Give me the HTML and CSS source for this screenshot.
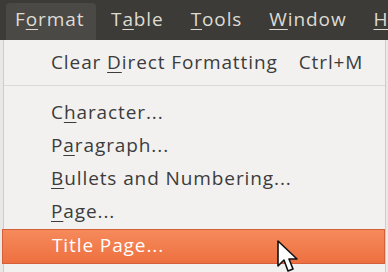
FILE: index.html
```
<!DOCTYPE html>
<html lang="en">
<head>
  <meta charset="UTF-8" />
  <title>Format menu</title>
  <link rel="stylesheet" href="styles.css">
</head>
<body>

<!-- Menu bar -->
<nav class="menubar">
  <span class="bar-item active">F<u>o</u>rmat</span>
  <span class="bar-item">T<u>a</u>ble</span>
  <span class="bar-item"><u>T</u>ools</span>
  <span class="bar-item"><u>W</u>indow</span>
  <span class="bar-item"><u>H</u>elp</span>
</nav>

<!-- Dropdown -->
<div class="dropdown">
  <div class="menu-row first">
    <span>Clear <u>D</u>irect Formatting</span>
    <span class="shortcut">Ctrl+M</span>
  </div>
  <div class="menu-sep"></div>
  <div class="menu-row">C<u>h</u>aracter...</div>
  <div class="menu-row">P<u>a</u>ragraph...</div>
  <div class="menu-row"><u>B</u>ullets and Numbering...</div>
  <div class="menu-row"><u>P</u>age...</div>
  <div class="menu-row selected">Title Page...</div>

  <!-- mouse pointer -->
  <svg class="cursor" width="26" height="34" viewBox="0 0 26 34">
    <path d="M2 1 L2 26 L8 20 L12 31 L17 29 L13 19 L21 19 Z" fill="#fff" stroke="#111" stroke-width="1.6" stroke-linejoin="round"/>
  </svg>
</div>

</body>
</html>
```

FILE: styles.css
```
body {
  margin: 0;
  font-family: "Open Sans", "DejaVu Sans", sans-serif;
  background-color: #e9e8e6;
  color: #3c3c3c;
  overflow: hidden;
}

u {
  text-decoration-thickness: 1px;
  text-underline-offset: 3px;
}

/* Top menu bar */
.menubar {
  height: 40px;
  background: #3c3b37;
  display: flex;
  align-items: flex-end;
  padding-left: 6px;
  font-size: 19px;
  letter-spacing: 0.9px;
  color: #dfdbd2;
  white-space: nowrap;
  overflow: hidden;
}

.bar-item {
  height: 37px;
  line-height: 33px;
  padding: 0 12px 0 15px;
  box-sizing: border-box;
}

.bar-item.active {
  background: #4a4945;
  border-radius: 4px 4px 0 0;
  width: 90px;
  padding-left: 9px;
}

/* Dropdown */
.dropdown {
  position: relative;
  margin: 0 2px 0 3px;
  height: 232px;
  background: #f2f1f0;
  border-left: 1px solid #cfcdca;
  border-right: 1px solid #cfcdca;
  font-size: 19px;
  letter-spacing: 0.9px;
}

.menu-row {
  height: 33px;
  line-height: 31px;
  padding-left: 47px;
  white-space: nowrap;
}

.menu-row.first {
  height: 45px;
  line-height: 45px;
  display: flex;
  gap: 21px;
}

.menu-sep {
  height: 1px;
  background: #dcdad6;
  margin: 0 0 11px 0;
}

.menu-row.selected {
  margin-left: -2px;
  padding-left: 49px;
  background: linear-gradient(#f58a5b, #ee7040);
  border: 1px solid #d4603a;
  color: #fff;
}

.cursor {
  position: absolute;
  left: 272px;
  top: 200px;
}
```
